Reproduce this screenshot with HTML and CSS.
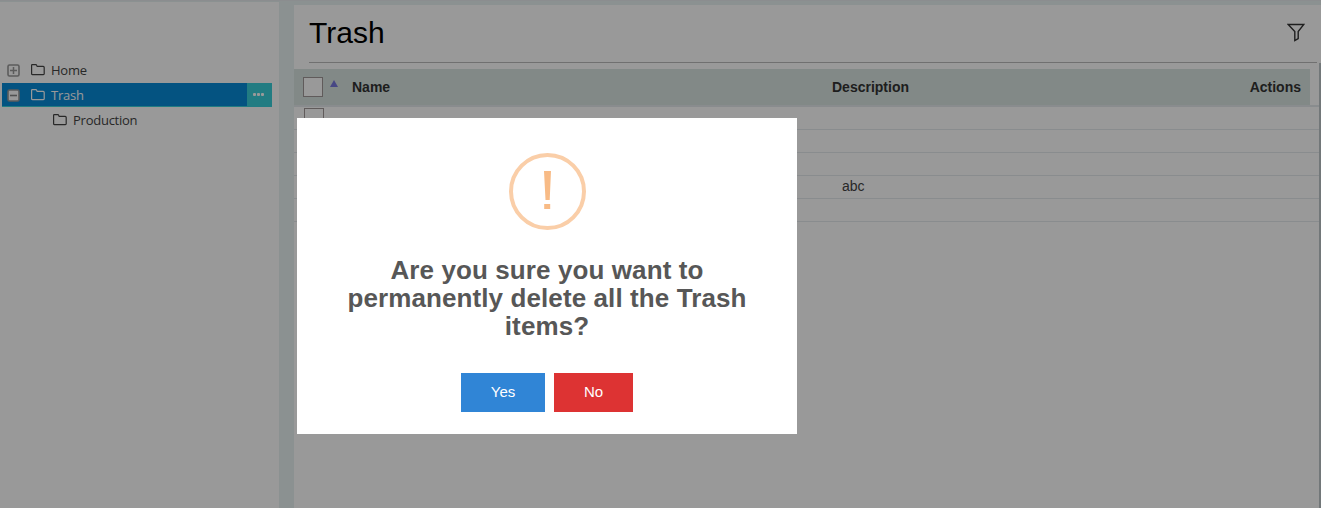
FILE: index.html
```
<!DOCTYPE html>
<html lang="en">
<head>
<meta charset="utf-8">
<title>Trash</title>
<link rel="stylesheet" href="styles.css">
</head>
<body>
<div class="app">
  <nav class="sidebar">
    <div class="node root">
      <svg class="toggle" viewBox="0 0 13 13"><rect x="1" y="1" width="11" height="11" rx="1.500" fill="none" stroke="#999" stroke-width="1.600"/><path d="M3 6.500h7M6.500 3v7" stroke="#999" stroke-width="1.500"/></svg>
      <svg class="folder" viewBox="0 0 14 12"><path d="M.6 9.6V1.2Q.6.6 1.2.6h3.6q.6 0 .8.6l.6 1.2h6q1 0 1 1v6.400q0 .8-.8.8H1.400q-.8 0-.8-1z"/></svg>
      <span class="label">Home</span>
    </div>
    <div class="node selected">
      <svg class="toggle" viewBox="0 0 13 13"><rect x="1" y="1" width="11" height="11" rx="1.500" fill="#fff" stroke="#999" stroke-width="1.600"/><path d="M3 6.500h7" stroke="#888" stroke-width="1.600"/></svg>
      <svg class="folder" viewBox="0 0 14 12"><path d="M.6 9.6V1.2Q.6.6 1.2.6h3.6q.6 0 .8.6l.6 1.2h6q1 0 1 1v6.400q0 .8-.8.8H1.400q-.8 0-.8-1z"/></svg>
      <span class="label">Trash</span>
      <span class="more"><i></i><i></i><i></i></span>
    </div>
    <div class="node child">
      <svg class="folder" viewBox="0 0 14 12"><path d="M.6 9.6V1.2Q.6.6 1.2.6h3.6q.6 0 .8.6l.6 1.2h6q1 0 1 1v6.400q0 .8-.8.8H1.400q-.8 0-.8-1z"/></svg>
      <span class="label">Production</span>
    </div>
  </nav>
  <main class="content">
    <header class="title-bar">
      <h1>Trash</h1>
      <svg class="filter" viewBox="0 0 18 19"><path d="M1.200 1.500h15.600l-5.600 7v7l-3.400 2v-9z"/></svg>
    </header>
    <div class="grid">
      <div class="grid-head">
        <span class="check"></span>
        <span class="sort"></span>
        <span class="name">Name</span>
        <span class="description">Description</span>
        <span class="actions">Actions</span>
      </div>
      <div class="row first"><span class="check"></span></div>
      <div class="row"></div>
      <div class="row"></div>
      <div class="row"><span class="value">abc</span></div>
      <div class="row"></div>
      <div class="scroll"></div>
    </div>
  </main>
</div>
<div class="overlay">
  <div class="dialog" role="dialog">
    <svg class="warning" viewBox="0 0 77 77"><circle cx="38.500" cy="38.500" r="36.500" fill="none" stroke="#facea8" stroke-width="4"/><path d="M35 18h7l-1.300 29h-4.200zM35.200 51h6v5h-6z" fill="#f8bb86"/></svg>
    <h2>Are you sure you want to<br>permanently delete all the Trash<br>items?</h2>
    <div class="buttons">
      <button class="yes">Yes</button>
      <button class="no">No</button>
    </div>
  </div>
</div>
</body>
</html>
```

FILE: styles.css
```
* { box-sizing: border-box; }
body { margin: 0; height: 508px; overflow: hidden; font-family: "Liberation Sans", Arial, sans-serif; }
.app { display: flex; width: 1321px; height: 508px; background: #e8f2f2; border-top: 1px solid #e8ecee; }
.sidebar { width: 279px; margin-top: 1px; padding: 57px 0 0 2px; background: #fff; }
.node { display: flex; align-items: center; width: 270px; height: 24px; padding-left: 5px; font: 13px "Open Sans", sans-serif; letter-spacing: -.25px; color: #444; }
.root { padding-bottom: 2px; }
.toggle { width: 13px; height: 13px; margin-right: 11px; }
.folder { width: 14px; height: 12px; margin-right: 6px; fill: none; stroke: #444; stroke-width: 1.200; }
.label { line-height: 22px; }
.selected { background: #088ad8; color: #fff; border-bottom: 1px solid #39cfd9; }
.selected .toggle { margin-top: 1px; }
.selected .folder { stroke: #fff; }
.more { display: flex; align-items: center; justify-content: center; gap: 1px; width: 25px; height: 24px; margin-left: auto; padding: 0 2px 1px 0; background: #39cfd9; align-self: flex-start; flex: none; }
.more i { width: 3px; height: 3px; border-radius: 1px; background: #fff; }
.child { height: 26px; padding-left: 51px; }
.content { width: 1027px; margin: 4px 0 0 15px; background: #fff; }
.title-bar { display: flex; justify-content: space-between; width: 1008px; height: 58px; margin-left: 15px; border-bottom: 1px solid #bbb; }
h1 { margin: 10px 0 0; font-size: 30px; font-weight: 400; line-height: 36px; color: #000; }
.filter { width: 18px; height: 19px; margin: 18px 12px 0 0; fill: none; stroke: #333; stroke-width: 1.400; }
.grid { position: relative; padding-top: 6px; }
.grid-head { display: flex; align-items: center; width: 1016px; height: 36px; padding: 0 9px; background: #d9e4e1; font-size: 14px; font-weight: 700; color: #333; }
.check { width: 20px; height: 20px; border: 1px solid #a09898; background: #fff; flex: none; }
.sort { margin: -7px 13px 0 7px; border: solid transparent; border-width: 0 4.500px 7px; border-bottom-color: #7777dd; }
.name { width: 480px; }
.sort + .name { margin-left: 1px; }
.actions { margin-left: auto; }
.row { height: 23px; border-bottom: 1px solid #e5eaed; overflow: hidden; }
.first { height: 25px; padding: 1px 0 0 10px; border-top: 2px solid #e5eaed; }
.first .check { display: block; }
.value { display: block; padding-left: 548px; font-size: 14px; line-height: 21px; color: #444; }
.scroll { position: absolute; top: 0; right: 0; width: 2px; height: 445px; background: #bec7ca; }
.overlay { position: absolute; inset: 0; padding: 118px 0 0 297px; background: rgba(0, 0, 0, .4); }
.dialog { display: flex; flex-direction: column; align-items: center; width: 500px; height: 316px; padding-top: 35px; background: #fff; }
.warning { width: 77px; height: 77px; }
h2 { margin: 26px 0 0; font-size: 26px; line-height: 28px; font-weight: 700; letter-spacing: .1px; text-align: center; white-space: nowrap; color: #575757; }
.buttons { display: flex; gap: 9px; margin-top: 33px; }
button { height: 39px; padding: 0 0 2px; border: 0; font: 15px "Liberation Sans", Arial, sans-serif; color: #fff; }
.yes { width: 84px; background: #3085d6; }
.no { width: 79px; background: #d33; }
```
